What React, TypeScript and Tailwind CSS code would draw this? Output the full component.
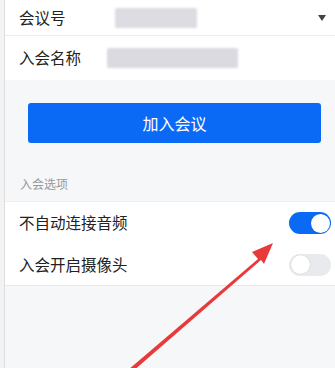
import React from "react";

function Toggle({ on }: { on: boolean }) {
  return (
    <div
      className={
        "relative w-[42px] h-[22px] rounded-full " +
        (on ? "bg-[#0a6af5]" : "bg-[#e9eaee]")
      }
    >
      <div
        className={
          "absolute top-[1.5px] w-[19px] h-[19px] rounded-full bg-white shadow-[0_0_1px_rgba(0,0,0,0.25)] " +
          (on ? "right-[1.5px]" : "left-[1.5px]")
        }
      />
    </div>
  );
}

export default function App() {
  return (
    <div
      className="relative w-[335px] h-[368px] overflow-hidden flex bg-[#f6f7f9] text-[#222]"
      style={{ fontFamily: '"Noto Sans CJK SC", "Noto Sans", sans-serif' }}
    >
      <div className="w-[5px] shrink-0 bg-[#f3f3f3] border-r border-[#dedede]" />
      <div className="flex-1 flex flex-col">
        <div className="bg-white">
          <div className="h-[36px] flex items-center pl-[14px] pr-[8px] border-b border-[#ececec]">
            <span className="w-[96px] text-[15.5px]">会议号</span>
            <div className="w-[82px] h-[20px] bg-[#dcdce2] blur-[1px] rounded-[2px]" />
            <div className="flex-1" />
            <div className="w-0 h-0 border-l-[4px] border-r-[4px] border-t-[6px] border-l-transparent border-r-transparent border-t-[#444] mr-[1px]" />
          </div>
          <div className="h-[44px] flex items-center pl-[14px]">
            <span className="w-[88px] text-[15.5px]">入会名称</span>
            <div className="w-[131px] h-[20px] bg-[#dadae0] blur-[1px] rounded-[2px]" />
          </div>
        </div>
        <div className="pl-[23px] pr-[14px] pt-[23px]">
          <div className="h-[40px] rounded-[3px] bg-[#0a6af6] flex items-center justify-center text-white text-[16px]">
            加入会议
          </div>
        </div>
        <div className="pl-[15px] pt-[32px] pb-[8px] text-[12px] text-[#999]">入会选项</div>
        <div className="bg-white border-t border-[#eeeeee]">
          <div className="h-[42px] flex items-center justify-between pl-[14px] pr-[4px]">
            <span className="text-[15.5px]">不自动连接音频</span>
            <Toggle on={true} />
          </div>
          <div className="h-[42px] flex items-center justify-between pl-[14px] pr-[4px] border-b border-[#e8e8e8]">
            <span className="text-[15.5px]">入会开启摄像头</span>
            <Toggle on={false} />
          </div>
        </div>
      </div>
      <svg
        className="absolute left-0 top-0 pointer-events-none"
        width="335"
        height="368"
        viewBox="0 0 335 368"
      >
        <path
          d="M128 370 L258 259 L252 252 L273 243 L264 264 L261 260 L132 372 Z"
          fill="#e83a3b"
        />
      </svg>
    </div>
  );
}
